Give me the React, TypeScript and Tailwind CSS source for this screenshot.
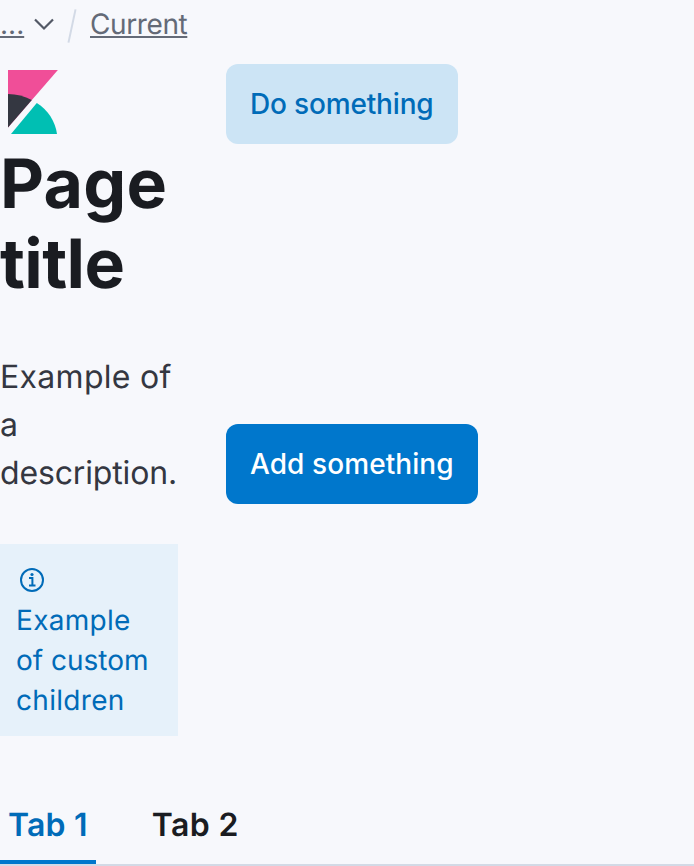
import React from 'react';

function KibanaLogo() {
  return (
    <svg width="64" height="64" viewBox="0 0 32 32" className="block">
      <path fill="#F04E98" d="M4 0v28.789L28.935 0z" />
      <path fill="#343741" d="M4 12v16.789l11.906-13.738A24.721 24.721 0 0 0 4 12" />
      <path fill="#00BFB3" d="M5.5 32 18.4 16.5C24 20 27.6 25.6 28.5 32z" />
    </svg>
  );
}

function InfoIcon() {
  return (
    <svg width="32" height="32" viewBox="0 0 32 32" fill="none" className="block">
      <circle cx="16" cy="16" r="11" stroke="#006bb8" strokeWidth="2" />
      <circle cx="16" cy="10.5" r="1.6" fill="#006bb8" />
      <path d="M13 14h3.4v7M13 21.5h6.5" stroke="#006bb8" strokeWidth="2" />
    </svg>
  );
}

export default function App() {
  return (
    <div className="h-[866px] w-[694px] overflow-hidden bg-[#f7f8fc] font-['Inter',sans-serif] [text-rendering:geometricPrecision]">
      {/* Breadcrumbs */}
      <div className="flex h-[48px] items-center text-[28px] leading-[40px] text-[#646a77]">
        <span className="w-[24px] underline">...</span>
        <svg width="24" height="14" viewBox="0 0 24 14" fill="none" className="ml-[8px] text-[#535966]">
          <path d="M3 2.5 12 11.5 21 2.5" stroke="currentColor" strokeWidth="2.2" />
        </svg>
        <span className="ml-[15px] mt-[4px] h-[34px] w-[2px] rotate-[12deg] bg-[#d3dae6]" />
        <span className="ml-[17px] tracking-[-0.4px] underline">Current</span>
      </div>

      <div className="flex h-[738px] items-start gap-[48px]">
        {/* Left column */}
        <div className="w-[178px] pt-[22px]">
          <KibanaLogo />
          <h1 className="mt-[10px] text-[68px] font-bold leading-[80px] text-[#1a1c21]">
            <span className="tracking-[0.25px]">Page</span> <span className="tracking-[-0.6px]">title</span>
          </h1>
          <p className="mt-[49px] text-[32px] leading-[48px] text-[#343741]">
            <span className="tracking-[0.3px]">Example of</span> a <span className="tracking-[-0.15px]">description.</span>
          </p>
          <div className="mt-[47px] bg-[#e6f1fa] p-[16px] text-[28px] leading-[40px] text-[#006bb8]">
            <div className="flex h-[40px] items-center">
              <InfoIcon />
            </div>
            <div>
              <span className="tracking-[0.3px]">Example</span> of custom <span className="tracking-[0.3px]">children</span>
            </div>
          </div>
        </div>

        {/* Actions */}
        <div className="flex flex-col items-start gap-[280px] pt-[16px] text-[28px] font-medium">
          <button className="h-[80px] rounded-[12px] bg-[#cce4f5] px-[24px] tracking-[-0.17px] text-[#006bb8]">Do something</button>
          <button className="h-[80px] rounded-[12px] bg-[#0077cc] px-[24px] tracking-[0.08px] text-white">Add something</button>
        </div>
      </div>

      {/* Tabs */}
      <div className="flex h-[80px] gap-[48px] border-b-[2px] border-[#d3dae6] text-[32px] font-semibold">
        <div className="border-b-[4px] border-[#0077cc] px-[8px] pt-[15px] tracking-[0.2px] text-[#006bb8]">Tab 1</div>
        <div className="px-[8px] pt-[15px] tracking-[0.4px] text-[#1a1c21]">Tab 2</div>
      </div>
    </div>
  );
}
